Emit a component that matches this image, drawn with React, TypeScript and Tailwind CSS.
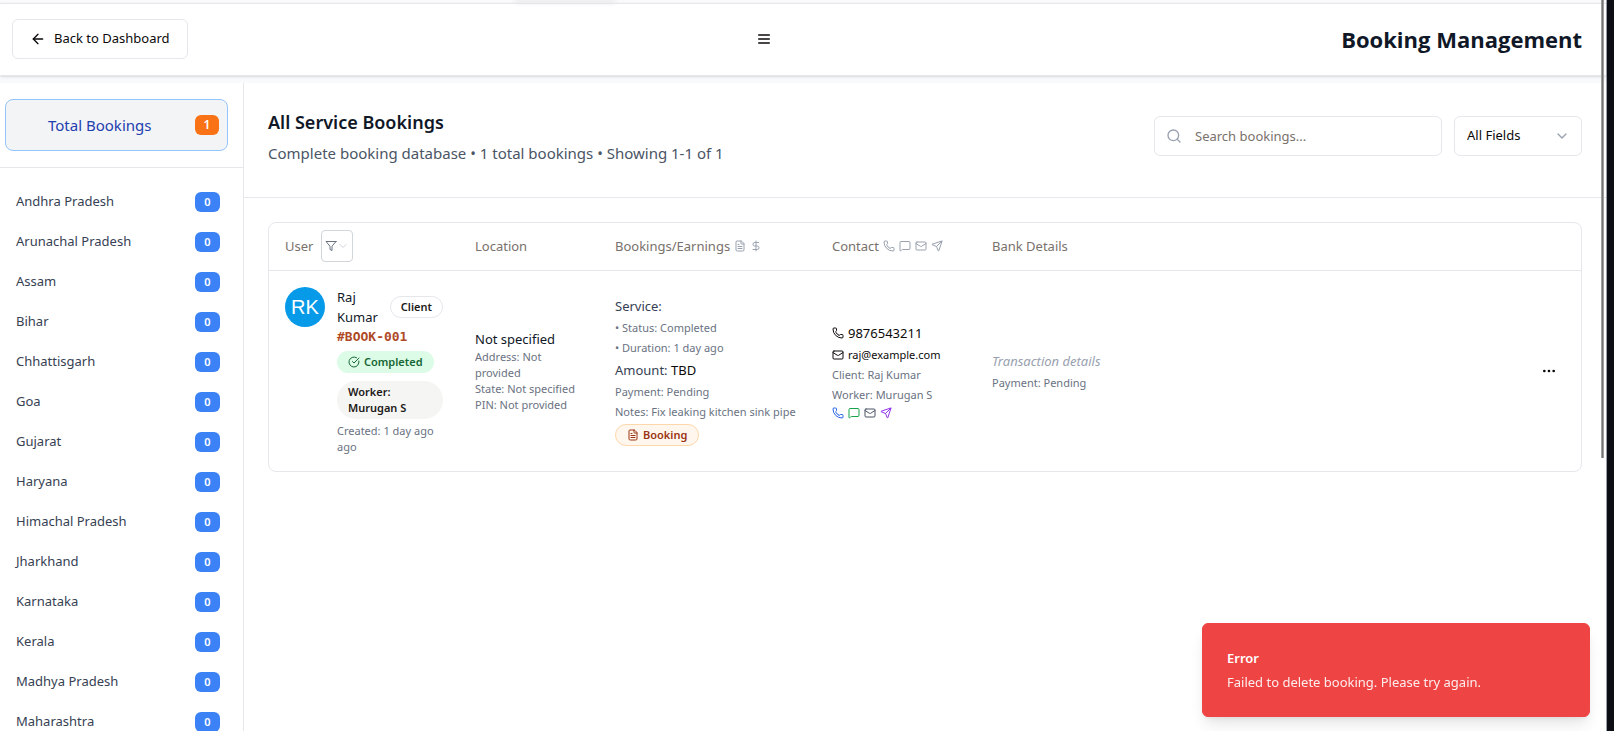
import React from "react";
import {
  ArrowLeft,
  ChevronDown,
  CircleCheckBig,
  DollarSign,
  FileText,
  Mail,
  MessageSquare,
  Phone,
  Search,
  Send,
} from "lucide-react";

const states: string[] = [
  "Andhra Pradesh",
  "Arunachal Pradesh",
  "Assam",
  "Bihar",
  "Chhattisgarh",
  "Goa",
  "Gujarat",
  "Haryana",
  "Himachal Pradesh",
  "Jharkhand",
  "Karnataka",
  "Kerala",
  "Madhya Pradesh",
  "Maharashtra",
];

function MenuIcon() {
  return (
    <svg viewBox="0 0 24 24" className="size-4" fill="none" stroke="currentColor" strokeWidth="2" strokeLinecap="round">
      <path d="M4 6h16M4 12h16M4 18h16" />
    </svg>
  );
}

function FunnelIcon() {
  return (
    <svg viewBox="0 0 24 24" className="size-3" fill="none" stroke="currentColor" strokeWidth="2" strokeLinejoin="round" strokeLinecap="round">
      <path d="M22 3H2l8 9.46V19l4 2v-8.54L22 3z" />
    </svg>
  );
}

function DotsIcon() {
  return (
    <svg viewBox="0 0 24 24" className="size-4" fill="currentColor" stroke="currentColor" strokeWidth="2">
      <circle cx="5" cy="12" r="1" />
      <circle cx="12" cy="12" r="1" />
      <circle cx="19" cy="12" r="1" />
    </svg>
  );
}

function TopBar() {
  return (
    <header className="flex items-center justify-between border-y border-gray-200 bg-white pt-[15px] pr-6 pb-4 pl-3 shadow-sm">
      <button className="flex h-10 items-center gap-2 rounded-md border border-gray-200 px-[17px] text-[13px] text-stone-950">
        <ArrowLeft className="size-4" />
        Back to Dashboard
      </button>
      <button aria-label="Menu" className="text-stone-950">
        <MenuIcon />
      </button>
      <h1 className="font-['Open_Sans',sans-serif] text-[22px] leading-8 font-bold text-gray-900">Booking Management</h1>
    </header>
  );
}

function Sidebar() {
  return (
    <aside className="w-[244px] shrink-0 overflow-hidden border-r border-gray-200">
      <div className="border-b border-gray-200 py-4 pr-[15px] pl-[5px]">
        <button className="flex h-[52px] w-full items-center rounded-lg border border-[#93c5fd] bg-gray-100 pr-2 pl-[42px] text-[15px] text-[#1e40af]">
          Total Bookings
          <span className="ml-auto flex h-5 w-6 items-center justify-center rounded-md bg-[#f97316] text-xs font-semibold text-white">1</span>
        </button>
      </div>
      <nav className="pt-[14px]">
        <ul>
          {states.map((name) => (
            <li key={name}>
              <button className="flex h-10 w-full items-center justify-between pr-[23px] pl-4 text-[13px] text-gray-700">
                {name}
                <span className="flex h-5 w-[25px] items-center justify-center rounded-md bg-[#3b82f6] text-[11px] font-semibold text-white">0</span>
              </button>
            </li>
          ))}
        </ul>
      </nav>
    </aside>
  );
}

function PageHeading() {
  return (
    <div className="flex items-center justify-between border-b border-gray-200 px-6 pt-6 pb-8">
      <div>
        <h2 className="text-lg leading-[30px] font-semibold text-gray-900">All Service Bookings</h2>
        <p className="mt-1 text-[15px] leading-6 text-gray-600">
          Complete booking database • 1 total bookings • Showing 1-1 of 1
        </p>
      </div>
      <div className="flex gap-3">
        <div className="relative">
          <Search className="absolute top-3 left-3 size-4 text-gray-400" />
          <input
            type="text"
            aria-label="Search bookings"
            placeholder="Search bookings..."
            className="h-10 w-72 rounded-md border border-gray-200 pr-3 pl-10 text-[13px] placeholder:text-stone-500"
          />
        </div>
        <div className="relative">
          <select
            aria-label="Search field"
            className="h-10 w-32 appearance-none rounded-md border border-gray-200 bg-white pr-8 pl-3 text-[13px] text-stone-950"
          >
            <option>All Fields</option>
          </select>
          <ChevronDown className="pointer-events-none absolute top-3 right-3 size-4 text-gray-400" />
        </div>
      </div>
    </div>
  );
}

function BookingsTable() {
  return (
    <div className="m-6 rounded-lg border border-gray-200">
      <table className="w-full table-fixed text-left text-[13px] leading-5">
        <colgroup>
          <col className="w-[190px]" />
          <col className="w-[140px]" />
          <col className="w-[217px]" />
          <col className="w-[160px]" />
          <col />
          <col className="w-20" />
        </colgroup>
        <thead>
          <tr className="h-[47px] border-b border-gray-200 text-stone-500">
            <th className="pl-4 font-normal">
              <div className="flex items-center gap-2">
                User
                <button aria-label="Filter users" className="flex size-8 items-center justify-center rounded border border-gray-300 text-gray-500">
                  <FunnelIcon />
                  <ChevronDown className="size-3 text-gray-300" />
                </button>
              </div>
            </th>
            <th className="pl-4 font-normal">Location</th>
            <th className="pl-4 font-normal">
              <div className="flex items-center gap-1">
                Bookings/Earnings
                <FileText className="size-3 text-gray-400" />
                <DollarSign className="size-3 text-gray-400" />
              </div>
            </th>
            <th className="pl-4 font-normal">
              <div className="flex items-center gap-1">
                Contact
                <Phone className="size-3 text-gray-400" />
                <MessageSquare className="size-3 text-gray-400" />
                <Mail className="size-3 text-gray-400" />
                <Send className="size-3 text-gray-400" />
              </div>
            </th>
            <th className="pl-4 font-normal">Bank Details</th>
            <th aria-label="Actions" />
          </tr>
        </thead>
        <tbody>
          <tr>
            <td className="p-4">
              <div className="flex gap-3">
                <div className="flex size-10 shrink-0 items-center justify-center rounded-full bg-[#069ae8] font-['Liberation_Sans',sans-serif] text-xl text-white">
                  RK
                </div>
                <div className="min-w-0 flex-1">
                  <div className="flex items-center gap-2">
                    <div className="flex-1 text-gray-900">Raj Kumar</div>
                    <span className="rounded-full border border-gray-200 px-[10px] py-0.5 text-[11px] leading-4 font-semibold text-stone-900">
                      Client
                    </span>
                  </div>
                  <div className="font-['DejaVu_Sans_Mono',monospace] text-[13px] leading-5 font-bold text-[#b04a26]">#BOOK-001</div>
                  <span className="mt-1 inline-flex h-[22px] items-center gap-1 rounded-full bg-[#dcfce7] px-[11px] text-[11px] font-semibold text-[#166534]">
                    <CircleCheckBig className="size-3" />
                    Completed
                  </span>
                  <div className="mt-2 rounded-full bg-stone-100 px-[11px] py-[3px] text-[11px] leading-4 font-semibold text-stone-900">
                    Worker: Murugan S
                  </div>
                  <div className="mt-1 text-[11px] leading-4 text-gray-500">Created: 1 day ago ago</div>
                </div>
              </div>
            </td>
            <td className="p-4">
              <div className="text-gray-900">Not specified</div>
              <div className="text-[11px] leading-4 text-gray-500">
                <div>Address: Not provided</div>
                <div>State: Not specified</div>
                <div>PIN: Not provided</div>
              </div>
            </td>
            <td className="p-4">
              <div className="flex flex-col items-start gap-1 text-[11px] leading-4 text-gray-500">
                <div className="text-[13px] leading-5 text-gray-700">Service:</div>
                <div>• Status: Completed</div>
                <div>• Duration: 1 day ago</div>
                <div className="text-[13px] leading-5 text-gray-700">
                  Amount: <span className="text-stone-950">TBD</span>
                </div>
                <div>Payment: Pending</div>
                <div className="whitespace-nowrap">Notes: Fix leaking kitchen sink pipe</div>
                <span className="flex items-center gap-1 rounded-full border border-[#fed7aa] bg-[#fff7ed] px-[11px] py-0.5 font-semibold text-[#9a3412]">
                  <FileText className="size-3" />
                  Booking
                </span>
              </div>
            </td>
            <td className="p-4">
              <div className="space-y-1 text-[11px] leading-4 text-gray-500">
                <div className="flex items-center gap-1 text-[13px] leading-5 text-stone-950">
                  <Phone className="size-3" />
                  9876543211
                </div>
                <div className="flex items-center gap-1 text-stone-950">
                  <Mail className="size-3" />
                  raj@example.com
                </div>
                <div>Client: Raj Kumar</div>
                <div>Worker: Murugan S</div>
                <div className="flex gap-1">
                  <button aria-label="Call">
                    <Phone className="size-3 text-[#2563eb]" />
                  </button>
                  <button aria-label="Message">
                    <MessageSquare className="size-3 text-[#16a34a]" />
                  </button>
                  <button aria-label="Email">
                    <Mail className="size-3 text-gray-600" />
                  </button>
                  <button aria-label="Send">
                    <Send className="size-3 text-[#9333ea]" />
                  </button>
                </div>
              </div>
            </td>
            <td className="p-4">
              <div className="text-gray-400 italic">Transaction details</div>
              <div className="mt-1 text-[11px] leading-4 text-gray-500">Payment: Pending</div>
            </td>
            <td className="pr-6">
              <button aria-label="Booking actions" className="ml-auto block text-stone-950">
                <DotsIcon />
              </button>
            </td>
          </tr>
        </tbody>
      </table>
    </div>
  );
}

function ErrorToast() {
  return (
    <div
      role="alert"
      className="absolute right-4 bottom-[14px] w-[388px] rounded-md border border-[#ef4444] bg-[#ef4444] p-6 text-[13px] leading-5 text-white shadow-lg"
    >
      <div className="font-semibold">Error</div>
      <div className="mt-1 opacity-90">Failed to delete booking. Please try again.</div>
    </div>
  );
}

export default function App() {
  return (
    <div className="flex h-screen overflow-hidden bg-[#0d0d14] font-['Noto_Sans','Open_Sans',sans-serif]">
      <div className="relative flex min-w-0 flex-1 flex-col border-r border-gray-400 bg-slate-50">
        <div className="flex h-[3px] shrink-0 bg-neutral-50">
          <div className="ml-[515px] h-full w-[100px] bg-neutral-200 blur-[2px]" />
        </div>
        <TopBar />
        <div className="mt-[7px] flex min-h-0 flex-1 bg-white">
          <Sidebar />
          <main className="min-w-0 flex-1">
            <PageHeading />
            <BookingsTable />
          </main>
        </div>
        <div className="absolute top-0 right-[2px] h-[458px] w-[3px] border-x border-neutral-400 bg-neutral-500" />
        <ErrorToast />
      </div>
      <div className="w-[7px] shrink-0" />
    </div>
  );
}
